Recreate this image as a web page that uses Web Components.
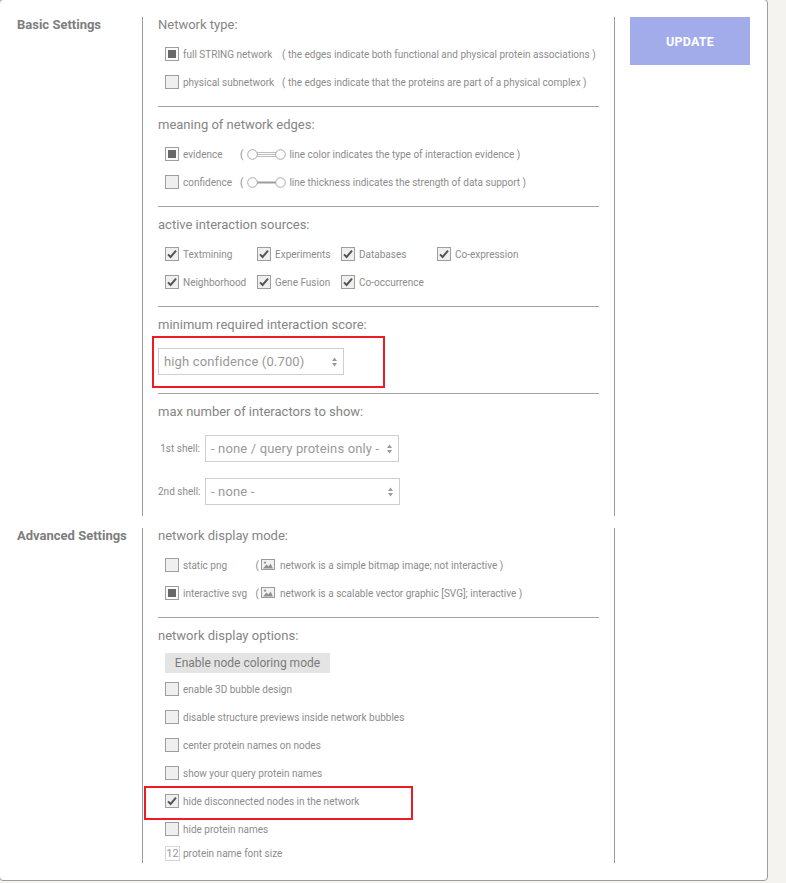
<!DOCTYPE html>
<html>
<head>
<meta charset="utf-8">
<title>Settings</title>
<style>
  html, body { margin: 0; padding: 0; background: #f4f3ef; }
  body { font-family: Roboto, "Liberation Sans", sans-serif; color: #8c8c8c; }
</style>
</head>
<body>
<settings-card>
  <settings-section label="Basic Settings">
    <option-group title="Network type:">
      <option-row state="square" label="full STRING network" label-width="99">( the edges indicate both functional and physical protein associations )</option-row>
      <option-row label="physical subnetwork" label-width="99">( the edges indicate that the proteins are part of a physical complex )</option-row>
    </option-group>
    <option-group title="meaning of network edges:">
      <option-row state="square" label="evidence" label-width="57">( <edge-icon kind="evidence"></edge-icon> line color indicates the type of interaction evidence )</option-row>
      <option-row label="confidence" label-width="57">( <edge-icon kind="confidence"></edge-icon> line thickness indicates the strength of data support )</option-row>
    </option-group>
    <option-group title="active interaction sources:">
      <source-grid>
        <option-row state="check" label="Textmining"></option-row>
        <option-row state="check" label="Experiments"></option-row>
        <option-row state="check" label="Databases"></option-row>
        <option-row state="check" label="Co-expression"></option-row>
        <option-row state="check" label="Neighborhood"></option-row>
        <option-row state="check" label="Gene Fusion"></option-row>
        <option-row state="check" label="Co-occurrence"></option-row>
      </source-grid>
    </option-group>
    <option-group title="minimum required interaction score:" gap="15" pad="18">
      <highlight-box kind="select">
        <fake-select width="186">high confidence (0.700)</fake-select>
      </highlight-box>
    </option-group>
    <option-group title="max number of interactors to show:" gap="15" last>
      <shell-row label="1st shell:"><fake-select width="194">- none / query proteins only -</fake-select></shell-row>
      <shell-row label="2nd shell:"><fake-select width="195">- none -</fake-select></shell-row>
    </option-group>
    <update-button slot="aside">UPDATE</update-button>
  </settings-section>
  <settings-section label="Advanced Settings" second>
    <option-group title="network display mode:">
      <option-row label="static png" label-width="72.5">( <image-icon></image-icon> network is a simple bitmap image; not interactive )</option-row>
      <option-row state="square" label="interactive svg" label-width="72.5">( <image-icon></image-icon> network is a scalable vector graphic [SVG]; interactive )</option-row>
    </option-group>
    <option-group title="network display options:" gap="9" last>
      <coloring-button>Enable node coloring mode</coloring-button>
      <option-row label="enable 3D bubble design"></option-row>
      <option-row label="disable structure previews inside network bubbles"></option-row>
      <option-row label="center protein names on nodes"></option-row>
      <option-row label="show your query protein names"></option-row>
      <highlight-box kind="row">
        <option-row state="check" label="hide disconnected nodes in the network"></option-row>
      </highlight-box>
      <option-row label="hide protein names"></option-row>
      <font-size-row value="12">protein name font size</font-size-row>
    </option-group>
  </settings-section>
</settings-card>

<script>
class SettingsCard extends HTMLElement {
  constructor() {
    super()
    this.attachShadow({mode: "open"})
    this.shadowRoot.innerHTML = `
      <style>
        :host {
          display: block;
          box-sizing: border-box;
          width: 769px;
          height: 882px;
          margin: -1px 0 0 -1px;
          padding-top: 17px;
          background: #fff;
          border: 1px solid #9c9c9c;
          border-radius: 4px;
        }
      </style>
      <slot></slot>
    `
  }
}

class SettingsSection extends HTMLElement {
  constructor() {
    super()
    this.attachShadow({mode: "open"})
  }
  connectedCallback() {
    const second = this.hasAttribute("second")
    this.shadowRoot.innerHTML = `
      <style>
        :host {
          display: grid;
          grid-template-columns: 142px 473px 1fr;
          margin-top: ${second ? "12px" : "0"};
        }
        .label {
          padding-left: 17px;
          font-size: 13px;
          line-height: 16px;
          font-weight: 700;
          color: #7d7d7d;
        }
        .main {
          border-left: 1px solid #9a9a9a;
          border-right: 1px solid #9a9a9a;
          padding: 0 15px;
          height: ${second ? "335px" : "499px"};
        }
        .aside { padding-left: 15px; }
      </style>
      <div class="label">${this.getAttribute("label")}</div>
      <div class="main"><slot></slot></div>
      <div class="aside"><slot name="aside"></slot></div>
    `
  }
}

class OptionGroup extends HTMLElement {
  constructor() {
    super()
    this.attachShadow({mode: "open"})
  }
  connectedCallback() {
    const last = this.hasAttribute("last")
    const gap = this.getAttribute("gap") || 7
    const pad = this.getAttribute("pad") || 10
    this.shadowRoot.innerHTML = `
      <style>
        :host {
          display: block;
          ${last ? "" : "border-bottom: 1px solid #a3a3a3;"}
          padding-bottom: ${pad}px;
          margin-bottom: 10px;
        }
        h3 {
          margin: 0 0 ${gap}px;
          font-size: 13px;
          line-height: 16px;
          font-weight: 400;
          color: #858585;
        }
      </style>
      <h3>${this.getAttribute("title")}</h3>
      <slot></slot>
    `
    this.removeAttribute("title")
  }
}

class OptionRow extends HTMLElement {
  constructor() {
    super()
    this.attachShadow({mode: "open"})
  }
  connectedCallback() {
    const state = this.getAttribute("state")
    const labelWidth = this.getAttribute("label-width")
    let mark = ""
    if (state === "square") mark = `<span class="square"></span>`
    if (state === "check") mark = `<svg width="12" height="12" viewBox="0 0 12 12"><path d="M2 6.4 L4.6 9 L10 2.6" fill="none" stroke="#555" stroke-width="2"/></svg>`
    this.shadowRoot.innerHTML = `
      <style>
        :host {
          display: flex;
          align-items: center;
          height: 28px;
          padding-left: 7px;
          font-size: 10px;
          color: #8c8c8c;
          white-space: nowrap;
        }
        .box {
          flex: none;
          box-sizing: border-box;
          width: 14px;
          height: 14px;
          margin-right: 4px;
          border: 1px solid #9e9e9e;
          background: ${state === "square" ? "#fafafa" : "#efefef"};
          display: flex;
          align-items: center;
          justify-content: center;
        }
        .square { width: 8px; height: 8px; background: #696969; }
        .label { flex: none; ${labelWidth ? `width: ${labelWidth}px;` : ""} }
      </style>
      <span class="box">${mark}</span>
      <span class="label">${this.getAttribute("label")}</span>
      <span class="note"><slot></slot></span>
    `
  }
}

class EdgeIcon extends HTMLElement {
  constructor() {
    super()
    this.attachShadow({mode: "open"})
  }
  connectedCallback() {
    const lines = this.getAttribute("kind") === "evidence"
      ? `<path d="M10 3.5H29M10 5.5H29M10 7.5H29" stroke="#bdbdbd" stroke-width="1"/>`
      : `<path d="M10 5.5H29" stroke="#9c9c9c" stroke-width="2"/>`
    this.shadowRoot.innerHTML = `
      <style>
        :host { display: inline-block; width: 39px; height: 11px; margin: 0 1px; vertical-align: -2px; }
        svg { display: block; }
      </style>
      <svg width="39" height="11" viewBox="0 0 39 11">
        ${lines}
        <circle cx="5.5" cy="5.5" r="4.8" fill="#fff" stroke="#a8a8a8"/>
        <circle cx="33.5" cy="5.5" r="4.8" fill="#fff" stroke="#a8a8a8"/>
      </svg>
    `
  }
}

class ImageIcon extends HTMLElement {
  constructor() {
    super()
    this.attachShadow({mode: "open"})
    this.shadowRoot.innerHTML = `
      <style>
        :host { display: inline-block; width: 14px; height: 11px; margin-right: 2px; vertical-align: -1px; }
        svg { display: block; }
      </style>
      <svg width="14" height="11" viewBox="0 0 14 11">
        <rect x="0.5" y="0.5" width="13" height="10" fill="#f2f2f2" stroke="#9a9a9a"/>
        <circle cx="4" cy="3.6" r="1.2" fill="#9a9a9a"/>
        <path d="M2 9.5 L5.5 5.5 L7.5 7.5 L9.5 4.5 L12 9.5 Z" fill="#8f8f8f"/>
      </svg>
    `
  }
}

class SourceGrid extends HTMLElement {
  constructor() {
    super()
    this.attachShadow({mode: "open"})
    this.shadowRoot.innerHTML = `
      <style>
        :host {
          display: grid;
          grid-template-columns: 92px 84px 96px auto;
          justify-content: start;
        }
      </style>
      <slot></slot>
    `
  }
}

class FakeSelect extends HTMLElement {
  constructor() {
    super()
    this.attachShadow({mode: "open"})
  }
  connectedCallback() {
    this.shadowRoot.innerHTML = `
      <style>
        :host {
          display: flex;
          align-items: center;
          justify-content: space-between;
          box-sizing: border-box;
          width: ${this.getAttribute("width")}px;
          height: 27px;
          padding: 0 6px 0 5px;
          border: 1px solid #cfcfcf;
          background: #fff;
          font-size: 13px;
          letter-spacing: 0.15px;
          color: #999;
          white-space: nowrap;
        }
        svg { flex: none; display: block; }
      </style>
      <span><slot></slot></span>
      <svg width="5" height="10" viewBox="0 0 5 10"><path d="M2.5 0.5 L5 4 H0 Z M2.5 9.5 L0 6 H5 Z" fill="#999"/></svg>
    `
  }
}

class ShellRow extends HTMLElement {
  constructor() {
    super()
    this.attachShadow({mode: "open"})
  }
  connectedCallback() {
    this.shadowRoot.innerHTML = `
      <style>
        :host {
          display: flex;
          align-items: center;
          height: 27px;
          margin-bottom: 16px;
          font-size: 10px;
          color: #8c8c8c;
          white-space: nowrap;
        }
        .label { width: 42px; margin-right: 5px; text-align: right; }
      </style>
      <span class="label">${this.getAttribute("label")}</span>
      <slot></slot>
    `
  }
}

class HighlightBox extends HTMLElement {
  constructor() {
    super()
    this.attachShadow({mode: "open"})
  }
  connectedCallback() {
    const isRow = this.getAttribute("kind") === "row"
    this.shadowRoot.innerHTML = `
      <style>
        :host { display: block; position: relative; }
        .frame {
          position: absolute;
          box-sizing: border-box;
          border: 2px solid #ed1c24;
          pointer-events: none;
          ${isRow
            ? "left: -14px; top: -1px; width: 269px; height: 34px;"
            : "left: -6px; top: -12px; width: 233px; height: 52px;"}
        }
      </style>
      <slot></slot>
      <div class="frame"></div>
    `
  }
}

class UpdateButton extends HTMLElement {
  constructor() {
    super()
    this.attachShadow({mode: "open"})
    this.shadowRoot.innerHTML = `
      <style>
        :host {
          display: flex;
          align-items: center;
          justify-content: center;
          width: 120px;
          height: 48px;
          background: #a2aceb;
          color: #fff;
          font-size: 12.5px;
          font-weight: 700;
          letter-spacing: 0.2px;
        }
      </style>
      <slot></slot>
    `
  }
}

class ColoringButton extends HTMLElement {
  constructor() {
    super()
    this.attachShadow({mode: "open"})
    this.shadowRoot.innerHTML = `
      <style>
        :host {
          display: flex;
          align-items: center;
          justify-content: center;
          width: 165px;
          height: 20px;
          margin: 0 0 2px 7px;
          background: #e4e4e4;
          color: #7a7a7a;
          font-size: 12px;
          white-space: nowrap;
        }
      </style>
      <slot></slot>
    `
  }
}

class FontSizeRow extends HTMLElement {
  constructor() {
    super()
    this.attachShadow({mode: "open"})
  }
  connectedCallback() {
    this.shadowRoot.innerHTML = `
      <style>
        :host {
          display: flex;
          align-items: center;
          height: 20px;
          padding-left: 7px;
          font-size: 10px;
          color: #8c8c8c;
          white-space: nowrap;
        }
        .num {
          box-sizing: border-box;
          width: 15px;
          height: 15px;
          margin-right: 3px;
          border: 1px solid #d6d6d6;
          text-align: center;
          line-height: 13px;
          font-size: 11px;
          color: #999;
        }
      </style>
      <span class="num">${this.getAttribute("value")}</span>
      <slot></slot>
    `
  }
}

customElements.define("settings-card", SettingsCard)
customElements.define("settings-section", SettingsSection)
customElements.define("option-group", OptionGroup)
customElements.define("option-row", OptionRow)
customElements.define("edge-icon", EdgeIcon)
customElements.define("image-icon", ImageIcon)
customElements.define("source-grid", SourceGrid)
customElements.define("fake-select", FakeSelect)
customElements.define("shell-row", ShellRow)
customElements.define("highlight-box", HighlightBox)
customElements.define("update-button", UpdateButton)
customElements.define("coloring-button", ColoringButton)
customElements.define("font-size-row", FontSizeRow)
</script>
</body>
</html>
